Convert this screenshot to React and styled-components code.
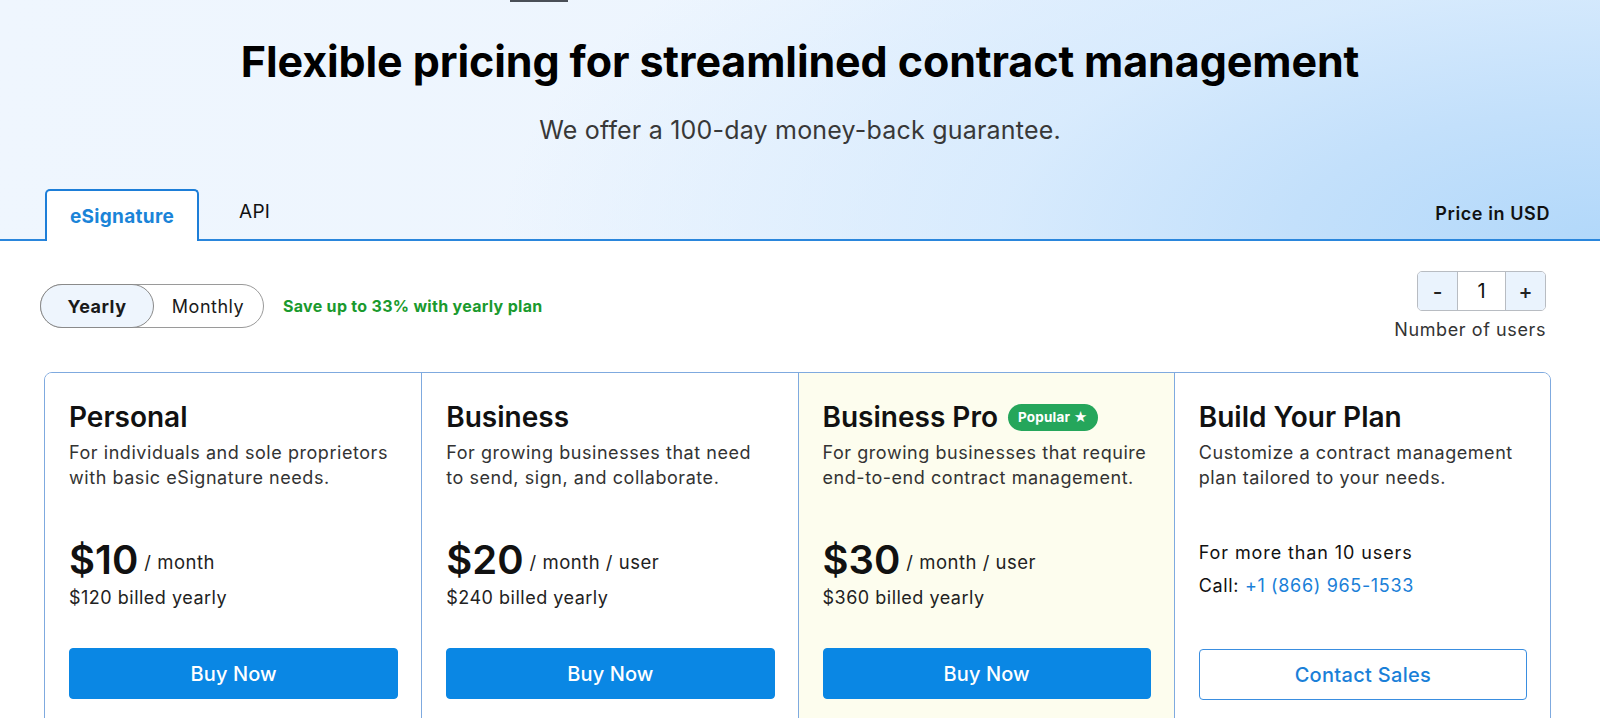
import React, { useState } from "react";
import styled, { createGlobalStyle } from "styled-components";

const Global = createGlobalStyle`
  html, body { margin: 0; padding: 0; background: #fff; }
  body { font-family: Inter, "Noto Sans", "Liberation Sans", sans-serif; color: #111; overflow: hidden; }
  * { box-sizing: border-box; }
`;

const Page = styled.div`
  width: 1600px;
  height: 718px;
  overflow: hidden;
`;

const Hero = styled.header`
  background:
    radial-gradient(ellipse 1100px 460px at 100% 100%, #b2d8fa 0%, #c3e0fb 28%, rgba(212, 233, 253, 0.8) 55%, rgba(238, 245, 254, 0) 100%),
    linear-gradient(95deg, #eff6fe 0%, #edf5fe 50%, #e4f0fd 80%, #d9ebfc 100%);
  border-bottom: 2px solid #2a86dc;
`;

const TopMark = styled.div`
  width: 58px;
  height: 2px;
  margin-left: 510px;
  background: #4a4f57;
`;

const Title = styled.h1`
  margin: 35px 0 0;
  text-align: center;
  font-size: 43px;
  line-height: 48px;
  font-weight: 700;
  letter-spacing: -0.1px;
  color: #000;
`;

const Subtitle = styled.p`
  margin: 30px 0 0;
  text-align: center;
  font-size: 25px;
  line-height: 30px;
  font-weight: 400;
  color: #383838;
  letter-spacing: 0.2px;
`;

const TabBar = styled.div`
  display: flex;
  align-items: flex-end;
  margin-top: 44px;
  padding: 0 50px 0 45px;
`;

const Tab = styled.button`
  height: 52px;
  margin-bottom: -2px;
  padding: ${(p) => (p.$active ? "0" : "0 38px 10px")};
  width: ${(p) => (p.$active ? "154px" : "auto")};
  border: ${(p) => (p.$active ? "2px solid #1d7ed8" : "2px solid transparent")};
  border-bottom: none;
  border-radius: 5px 5px 0 0;
  background: ${(p) => (p.$active ? "#fff" : "transparent")};
  color: ${(p) => (p.$active ? "#1a84d8" : "#111")};
  font-family: inherit;
  font-size: 19px;
  letter-spacing: 0.3px;
  font-weight: ${(p) => (p.$active ? 700 : 400)};
  cursor: pointer;
`;

const Currency = styled.div`
  margin-left: auto;
  padding-bottom: 15px;
  font-size: 18px;
  letter-spacing: 0.6px;
  font-weight: 600;
  color: #111;
`;

const Main = styled.main`
  padding: 0 49px 0 44px;
`;

const Controls = styled.div`
  display: flex;
  justify-content: space-between;
  align-items: flex-start;
  padding: 29px 5px 0 0;
  margin-left: -4px;
  height: 131px;
`;

const BillingGroup = styled.div`
  display: flex;
  align-items: center;
  gap: 19px;
  margin-top: 14px;
`;

const Toggle = styled.div`
  display: flex;
  width: 224px;
  height: 44px;
  border: 1px solid #9a9a9a;
  border-radius: 22px;
`;

const ToggleOption = styled.button`
  flex: ${(p) => (p.$active ? "0 0 114px" : "1")};
  margin: -1px;
  border: ${(p) => (p.$active ? "1px solid #8a8a8a" : "none")};
  border-radius: 22px;
  background: ${(p) => (p.$active ? "#eef5fd" : "transparent")};
  font-family: inherit;
  font-size: 18px;
  letter-spacing: 0.5px;
  font-weight: ${(p) => (p.$active ? 700 : 400)};
  color: #1a1a1a;
  cursor: pointer;
`;

const SaveNote = styled.span`
  font-size: 16px;
  letter-spacing: 0.3px;
  font-weight: 700;
  color: #1a9a2e;
`;

const UsersGroup = styled.div`
  display: flex;
  flex-direction: column;
  align-items: flex-end;
  margin-top: 1px;
`;

const Stepper = styled.div`
  display: flex;
  height: 40px;
  border: 1px solid #b8bcc2;
  border-radius: 5px;
  overflow: hidden;
`;

const StepButton = styled.button`
  width: 39px;
  border: none;
  background: #eaf3fd;
  font-family: inherit;
  font-size: 21px;
  font-weight: 500;
  color: #222;
  cursor: pointer;
`;

const StepValue = styled.div`
  width: 49px;
  display: flex;
  align-items: center;
  justify-content: center;
  border-left: 1px solid #b8bcc2;
  border-right: 1px solid #b8bcc2;
  font-size: 20px;
  color: #111;
`;

const UsersLabel = styled.div`
  margin-top: 7px;
  font-size: 18px;
  letter-spacing: 0.6px;
  line-height: 24px;
  color: #333;
`;

const Plans = styled.section`
  display: grid;
  grid-template-columns: repeat(4, 1fr);
  border: 1px solid #7faadf;
  border-radius: 8px;
  overflow: hidden;
`;

const PlanCard = styled.article`
  display: flex;
  flex-direction: column;
  padding: 28px 23px 60px 24px;
  background: ${(p) => (p.$highlight ? "#fdfdee" : "#fff")};
  border-left: ${(p) => (p.$first ? "none" : "1px solid #7faadf")};
`;

const PlanHead = styled.div`
  display: flex;
  align-items: center;
  gap: 10px;
`;

const PlanName = styled.h2`
  margin: 0;
  font-size: 28px;
  line-height: 32px;
  font-weight: 600;
  color: #111;
`;

const Badge = styled.span`
  display: inline-flex;
  align-items: center;
  gap: 4px;
  height: 27px;
  padding: 0 10px;
  border-radius: 14px;
  background: #25a65b;
  color: #fff;
  font-size: 13.5px;
  letter-spacing: 0.2px;
  font-weight: 700;
`;

const PlanDesc = styled.p`
  margin: 7px 0 0;
  font-size: 18px;
  line-height: 25px;
  color: #333;
  letter-spacing: 0.55px;
`;

const PriceRow = styled.div`
  display: flex;
  align-items: center;
  gap: 6px;
  margin-top: 46px;
`;

const Amount = styled.span`
  font-size: 40px;
  line-height: 48px;
  font-weight: 600;
  color: #111;
`;

const Period = styled.span`
  padding-top: 4px;
  font-size: 18.5px;
  letter-spacing: 0.5px;
  font-weight: 400;
  color: #222;
`;

const Billed = styled.div`
  margin-top: 2px;
  font-size: 18px;
  line-height: 24px;
  color: #222;
  letter-spacing: 0.5px;
`;

const ActionButton = styled.button`
  height: 51px;
  margin-top: ${(p) => p.$top || "38px"};
  border-radius: 4px;
  border: 1px solid ${(p) => (p.$outline ? "#3a8ee0" : "#0a87e4")};
  background: ${(p) => (p.$outline ? "#fff" : "#0a87e4")};
  color: ${(p) => (p.$outline ? "#1a80d8" : "#fff")};
  font-family: inherit;
  font-size: 20px;
  letter-spacing: ${(p) => (p.$outline ? "0.3px" : "0.1px")};
  font-weight: 500;
  cursor: pointer;
`;

const Note = styled.div`
  margin-top: ${(p) => p.$top};
  font-size: 18px;
  line-height: 24px;
  color: #111;
  letter-spacing: ${(p) => p.$spacing || "0.65px"};
`;

const Phone = styled.a`
  color: #1a80d8;
  text-decoration: none;
`;

const plans = [
  {
    name: "Personal",
    desc: ["For individuals and sole proprietors", "with basic eSignature needs."],
    amount: "$10",
    period: "/ month",
    billed: "$120 billed yearly",
  },
  {
    name: "Business",
    desc: ["For growing businesses that need", "to send, sign, and collaborate."],
    amount: "$20",
    period: "/ month / user",
    billed: "$240 billed yearly",
  },
  {
    name: "Business Pro",
    popular: true,
    desc: ["For growing businesses that require", "end-to-end contract management."],
    amount: "$30",
    period: "/ month / user",
    billed: "$360 billed yearly",
  },
];

export default function App() {
  const [yearly, setYearly] = useState(true);
  const [users, setUsers] = useState(1);
  return (
    <Page>
      <Global />
      <Hero>
        <TopMark />
        <Title>Flexible pricing for streamlined contract management</Title>
        <Subtitle>We offer a 100-day money-back guarantee.</Subtitle>
        <TabBar>
          <Tab $active>eSignature</Tab>
          <Tab>API</Tab>
          <Currency>Price in USD</Currency>
        </TabBar>
      </Hero>
      <Main>
        <Controls>
          <BillingGroup>
            <Toggle>
              <ToggleOption $active={yearly} onClick={() => setYearly(true)}>
                Yearly
              </ToggleOption>
              <ToggleOption $active={!yearly} onClick={() => setYearly(false)}>
                Monthly
              </ToggleOption>
            </Toggle>
            <SaveNote>Save up to 33% with yearly plan</SaveNote>
          </BillingGroup>
          <UsersGroup>
            <Stepper>
              <StepButton onClick={() => setUsers((u) => Math.max(1, u - 1))}>-</StepButton>
              <StepValue>{users}</StepValue>
              <StepButton onClick={() => setUsers((u) => u + 1)}>+</StepButton>
            </Stepper>
            <UsersLabel>Number of users</UsersLabel>
          </UsersGroup>
        </Controls>
        <Plans>
          {plans.map((p, i) => (
            <PlanCard key={p.name} $first={i === 0} $highlight={p.popular}>
              <PlanHead>
                <PlanName>{p.name}</PlanName>
                {p.popular && <Badge>Popular ★</Badge>}
              </PlanHead>
              <PlanDesc>
                {p.desc[0]}
                <br />
                {p.desc[1]}
              </PlanDesc>
              <PriceRow>
                <Amount>{p.amount}</Amount>
                <Period>{p.period}</Period>
              </PriceRow>
              <Billed>{p.billed}</Billed>
              <ActionButton>Buy Now</ActionButton>
            </PlanCard>
          ))}
          <PlanCard>
            <PlanHead>
              <PlanName>Build Your Plan</PlanName>
            </PlanHead>
            <PlanDesc>
              Customize a contract management
              <br />
              plan tailored to your needs.
            </PlanDesc>
            <Note $top="51px" $spacing="0.9px">For more than 10 users</Note>
            <Note $top="9px">
              Call: <Phone href="#">+1 (866) 965-1533</Phone>
            </Note>
            <ActionButton $outline $top="51px">Contact Sales</ActionButton>
          </PlanCard>
        </Plans>
      </Main>
    </Page>
  );
}
